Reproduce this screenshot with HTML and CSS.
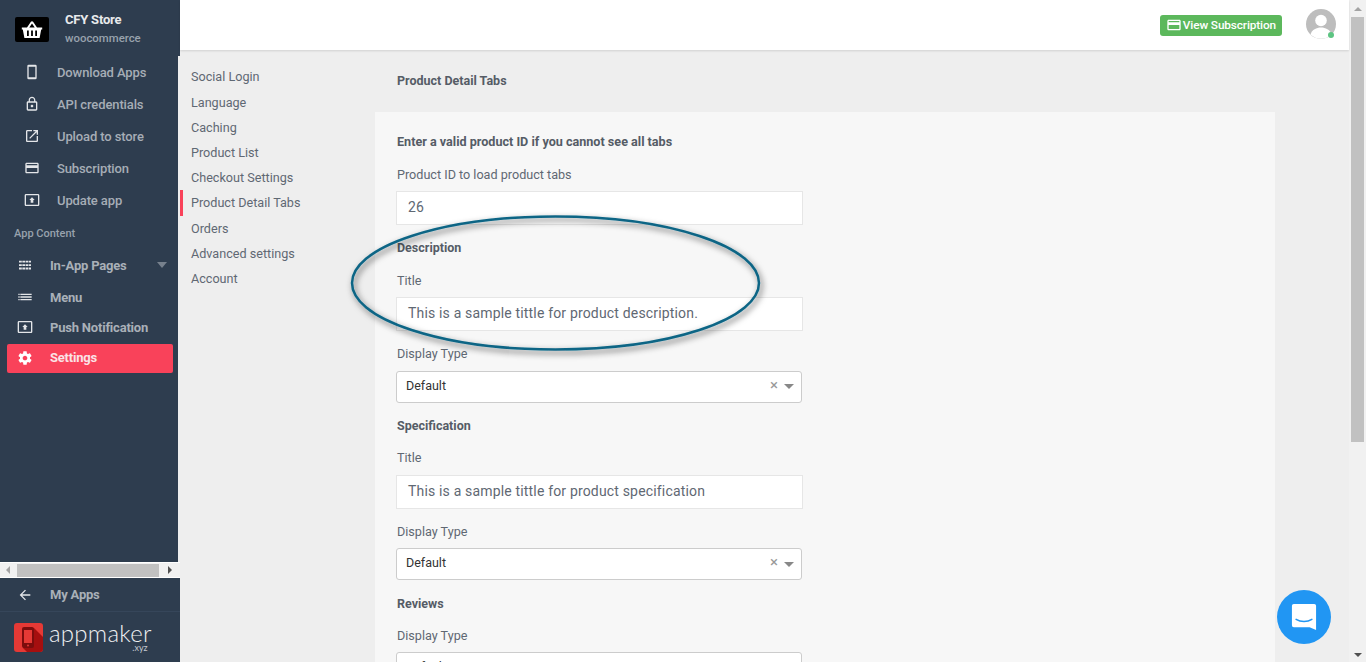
FILE: index.html
```html
<!DOCTYPE html>
<html lang="en">
<head>
<meta charset="utf-8">
<title>Product Detail Tabs</title>
<link rel="stylesheet" href="styles.css">
</head>
<body>
<div class="app">
  <aside class="sidebar">
    <div class="brand">
      <div class="brand-logo">
        <svg viewBox="0 0 24 24" width="24" height="24"><path fill="#fff" d="M12 3.200a1.300 1.300 0 0 1 1.100.6L17 9.500h5.200v1.900h-1L19.600 20H4.400L2.800 11.400h-1V9.500H7l3.900-5.700A1.300 1.300 0 0 1 12 3.200zM12 5.600 9.300 9.500h5.400zM7 12.500V18h1.800v-5.500zM11.100 12.500V18h1.800v-5.500zM15.200 12.500V18H17v-5.500z" fill-rule="evenodd"/></svg>
      </div>
      <div class="brand-text">
        <div class="brand-name">CFY Store</div>
        <div class="brand-type">woocommerce</div>
      </div>
    </div>
    <div class="side-scroll">
      <nav class="nav-top">
        <a class="nav-item"><svg class="ic" viewBox="0 0 24 24"><path fill-rule="evenodd" d="M7 1h10a2 2 0 0 1 2 2v18a2 2 0 0 1-2 2H7a2 2 0 0 1-2-2V3a2 2 0 0 1 2-2zm0 3v16h10V4z"/></svg><span>Download Apps</span></a>
        <a class="nav-item"><svg class="ic" viewBox="0 0 24 24"><path d="M12 17c1.100 0 2-.9 2-2s-.9-2-2-2-2 .9-2 2 .9 2 2 2zm6-9h-1V6c0-2.760-2.240-5-5-5S7 3.240 7 6v2H6c-1.100 0-2 .9-2 2v10c0 1.100.9 2 2 2h12c1.100 0 2-.9 2-2V10c0-1.100-.9-2-2-2zM8.900 6c0-1.710 1.390-3.100 3.100-3.100s3.100 1.390 3.100 3.100v2H8.900V6zM18 20H6V10h12v10z"/></svg><span>API credentials</span></a>
        <a class="nav-item"><svg class="ic" viewBox="0 0 24 24"><path d="M19 19H5V5h7V3H5c-1.110 0-2 .9-2 2v14c0 1.100.89 2 2 2h14c1.100 0 2-.9 2-2v-7h-2v7zM14 3v2h3.590l-9.830 9.830 1.410 1.410L19 6.410V10h2V3h-7z"/></svg><span>Upload to store</span></a>
        <a class="nav-item"><svg class="ic" viewBox="0 0 24 24"><path d="M20 4H4c-1.110 0-1.990.89-1.990 2L2 18c0 1.110.89 2 2 2h16c1.110 0 2-.89 2-2V6c0-1.110-.89-2-2-2zm0 14H4v-6h16v6zm0-10H4V6h16v2z"/></svg><span>Subscription</span></a>
        <a class="nav-item"><svg class="ic" viewBox="0 0 24 24"><path d="M21 3H3c-1.110 0-2 .89-2 2v14c0 1.110.89 2 2 2h18c1.110 0 2-.89 2-2V5c0-1.110-.89-2-2-2zm0 16.020H3V4.980h18v14.040zM10 12H8l4-4 4 4h-2v4h-4v-4z"/></svg><span>Update app</span></a>
      </nav>
      <div class="nav-heading">App Content</div>
      <nav class="nav-main">
        <a class="main-item tall"><svg class="ic" viewBox="0 0 24 24"><path d="M3 5.500h4.200v2.700H3zm5 0h4.200v2.700H8zm5 0h4.200v2.700H13zm5 0h3v2.700h-3zM3 10.700h4.200v2.700H3zm5 0h4.200v2.700H8zm5 0h4.200v2.700H13zm5 0h3v2.700h-3zM3 15.900h4.200v2.700H3zm5 0h4.200v2.700H8zm5 0h4.200v2.700H13zm5 0h3v2.700h-3z"/></svg><span>In-App Pages</span><i class="caret"></i></a>
        <a class="main-item tall"><svg class="ic" viewBox="0 0 24 24"><path d="M2 7h2v2H2zm3 0h17v2H5zM2 11h2v2H2zm3 0h17v2H5zM2 15h2v2H2zm3 0h17v2H5z"/></svg><span>Menu</span></a>
        <a class="main-item push"><svg class="ic" viewBox="0 0 24 24"><path d="M21 3H3c-1.110 0-2 .89-2 2v14c0 1.110.89 2 2 2h18c1.110 0 2-.89 2-2V5c0-1.110-.89-2-2-2zm0 16.020H3V4.980h18v14.040zM10 12H8l4-4 4 4h-2v4h-4v-4z"/></svg><span>Push Notification</span></a>
        <a class="main-item active"><svg class="ic" viewBox="0 0 24 24"><path d="M19.430 12.980c.04-.32.07-.64.07-.98s-.03-.66-.07-.98l2.110-1.650c.19-.15.24-.42.12-.64l-2-3.460c-.12-.22-.39-.3-.61-.22l-2.490 1c-.52-.4-1.080-.73-1.690-.98l-.38-2.650C14.460 2.180 14.250 2 14 2h-4c-.25 0-.46.18-.49.42l-.38 2.650c-.61.25-1.170.59-1.690.98l-2.490-1c-.23-.09-.49 0-.61.22l-2 3.460c-.13.22-.07.49.12.64l2.110 1.650c-.04.32-.07.65-.07.98s.03.66.07.98l-2.110 1.650c-.19.15-.24.42-.12.64l2 3.460c.12.22.39.3.61.22l2.490-1c.52.4 1.080.73 1.690.98l.38 2.650c.03.24.24.42.49.42h4c.25 0 .46-.18.49-.42l.38-2.650c.61-.25 1.170-.59 1.690-.98l2.490 1c.23.09.49 0 .61-.22l2-3.460c.12-.22.07-.49-.12-.64l-2.110-1.650zM12 15.500c-1.930 0-3.500-1.570-3.500-3.500s1.570-3.500 3.500-3.500 3.500 1.570 3.500 3.500-1.570 3.500-3.500 3.500z"/></svg><span>Settings</span></a>
      </nav>
    </div>
    <div class="h-scroll">
      <i class="arrow-left"></i>
      <div class="h-thumb"></div>
      <i class="arrow-right"></i>
    </div>
    <a class="my-apps"><svg class="ic" viewBox="0 0 24 24"><path d="M20 11H7.830l5.590-5.590L12 4l-8 8 8 8 1.410-1.410L7.830 13H20v-2z"/></svg><span>My Apps</span></a>
    <div class="maker">
      <svg class="maker-mark" viewBox="0 0 29 29" width="29" height="29">
        <rect width="29" height="29" rx="3" fill="#e53935"/>
        <path d="M9 25 9 5h11l9 9v12a3 3 0 0 1-3 3H13z" fill="#a50f0f"/>
        <rect x="8" y="4" width="12" height="21" rx="2" fill="#7c0d0d"/>
        <rect x="10" y="7" width="8" height="13" fill="#e53935"/>
        <circle cx="14" cy="22.500" r="1" fill="#e53935"/>
      </svg>
      <div class="maker-text">
        <div class="maker-word">appmaker</div>
        <div class="maker-xyz">.xyz</div>
      </div>
    </div>
  </aside>

  <div class="main">
    <header class="topbar">
      <a class="sub-btn"><svg viewBox="0 0 24 24" width="16" height="16"><path fill="#fff" d="M20 4H4c-1.110 0-1.990.89-1.990 2L2 18c0 1.110.89 2 2 2h16c1.110 0 2-.89 2-2V6c0-1.110-.89-2-2-2zm0 14H4v-6h16v6zm0-10H4V6h16v2z"/></svg>View Subscription</a>
      <div class="avatar">
        <svg viewBox="0 0 30 30" width="30" height="30"><circle cx="15" cy="15" r="15" fill="#bdbdbd"/><circle cx="15" cy="11.500" r="5.800" fill="#fff"/><path d="M4.500 25.500c1.500-5 6-7 10.500-7s9 2 10.500 7a15 15 0 0 1-21 0z" fill="#fff"/></svg>
        <i class="status"></i>
      </div>
    </header>
    <div class="content">
      <nav class="subnav">
        <a>Social Login</a>
        <a>Language</a>
        <a>Caching</a>
        <a>Product List</a>
        <a>Checkout Settings</a>
        <a class="current">Product Detail Tabs</a>
        <a>Orders</a>
        <a>Advanced settings</a>
        <a>Account</a>
      </nav>
      <section class="panel">
        <div class="panel-head">Product Detail Tabs</div>
        <div class="panel-body">
          <h4 class="tight">Enter a valid product ID if you cannot see all tabs</h4>
          <label>Product ID to load product tabs</label>
          <div class="input">26</div>
          <h4>Description</h4>
          <label>Title</label>
          <div class="input">This is a sample tittle for product description.</div>
          <label>Display Type</label>
          <div class="select"><span>Default</span><b>×</b><i class="sel-caret"></i></div>
          <h4>Specification</h4>
          <label>Title</label>
          <div class="input">This is a sample tittle for product specification</div>
          <label>Display Type</label>
          <div class="select"><span>Default</span><b>×</b><i class="sel-caret"></i></div>
          <h4 class="last">Reviews</h4>
          <label>Display Type</label>
          <div class="select"><span>Default</span><b>×</b><i class="sel-caret"></i></div>
        </div>
      </section>
    </div>
  </div>

  <div class="v-scroll">
    <i class="arrow-up"></i>
    <div class="v-thumb"></div>
    <div class="v-rest"></div>
    <i class="arrow-down"></i>
  </div>
</div>

<svg class="callout" viewBox="0 0 440 160" width="440" height="160">
  <defs><filter id="sh" x="-10%" y="-20%" width="120%" height="140%"><feDropShadow dx="2" dy="3" stdDeviation="3" flood-color="#000" flood-opacity=".65"/></filter></defs>
  <ellipse cx="216.500" cy="77" rx="203.500" ry="66.500" fill="none" stroke="#0b6585" stroke-width="2.500" filter="url(#sh)"/>
</svg>

<div class="chat">
  <svg viewBox="0 0 28 30" width="26" height="28"><path fill="#fff" d="M3 1h22a2 2 0 0 1 2 2v26l-7-3H3a2 2 0 0 1-2-2V3a2 2 0 0 1 2-2z"/><path d="M5.500 17.500c5 3 12 3 17 0" fill="none" stroke="#2196f3" stroke-width="1.600" stroke-linecap="round"/></svg>
</div>
</body>
</html>
```
FILE: styles.css
```css
* { box-sizing: border-box; }
html, body { margin: 0; height: 662px; overflow: hidden; }
body { font-family: Roboto, "Liberation Sans", sans-serif; font-size: 13px; color: #555; background: #eee; position: relative; }
a { text-decoration: none; color: inherit; }
.app { display: flex; height: 662px; }

.sidebar { width: 180px; flex: none; display: flex; flex-direction: column; background: #eee; }
.brand { height: 56px; background: #2e3d4f; display: flex; align-items: flex-start; padding: 17px 0 0 15px; flex: none; }
.brand-logo { width: 34px; height: 25px; background: #000; border-radius: 2px; display: flex; align-items: center; justify-content: center; margin-right: 16px; }
.brand-logo svg { width: 24px; height: 24px; }
.brand-text { margin-top: -5px; }
.brand-name { color: #e8eaec; font-weight: 700; font-size: 13px; line-height: 16px; letter-spacing: -.2px; }
.brand-type { color: #98a2ad; font-size: 11.400px; font-weight: 500; line-height: 16px; margin-top: 2px; }
.side-scroll { flex: 1; width: 178px; background: #2e3d4f; min-height: 0; }

.ic { width: 16px; height: 16px; fill: #e4e6e9; flex: none; }
.nav-item { display: flex; align-items: center; height: 32px; padding-left: 24px; color: #a6adb6; font-weight: 500; font-size: 13px; letter-spacing: -.12px; }
.nav-item .ic { margin-right: 17px; }
.nav-heading { color: #98a2ad; font-size: 11px; font-weight: 500; line-height: 16px; padding: 10px 0 0 14px; height: 33px; }
.nav-main { padding: 0 5px 0 7px; }
.main-item { display: flex; align-items: center; height: 30px; padding-left: 10px; color: #a9b0b8; font-weight: 700; font-size: 13px; letter-spacing: -.2px; border-radius: 2px; position: relative; }
.main-item.tall { height: 32px; }
.main-item.push { height: 31px; padding-bottom: 3px; }
.main-item .ic { margin-right: 17px; }
.main-item.active { background: #f9425a; color: #fbe3e6; height: 29px; padding-bottom: 2px; }
.main-item.active .ic { fill: #fff; }
.caret { position: absolute; right: 6px; top: 13px; border: 5px solid transparent; border-top: 6px solid #77818d; border-bottom: 0; }

.h-scroll { height: 16px; flex: none; background: #f1f1f1; border-top: 1px solid #fff; border-bottom: 1px solid #fff; display: flex; align-items: center; padding: 0 8px 0 6px; gap: 6px; width: 180px; }
.h-thumb { width: 142px; height: 13px; background: #c1c1c1; margin-left: 1px; }
.arrow-left { border: 4px solid transparent; border-right: 4px solid #a3a3a3; border-left: 0; }
.arrow-right { border: 4px solid transparent; border-left: 4px solid #505050; border-right: 0; margin-left: 3px; }

.my-apps { height: 34px; flex: none; display: flex; align-items: center; padding-left: 17px; background: #2e3d4f; color: #a9b0b8; font-weight: 700; letter-spacing: -.2px; border-bottom: 1px solid #36465a; }
.my-apps .ic { margin-right: 17px; }
.maker { height: 50px; flex: none; background: #2e3d4f; display: flex; align-items: flex-start; padding: 11px 0 0 14px; }
.maker-mark { flex: none; }
.maker-text { margin-left: 6px; margin-top: 1px; font-family: Lato, "Open Sans", sans-serif; }
.maker-word { color: #eef0f2; font-weight: 300; font-size: 24px; line-height: 17px; letter-spacing: .25px; }
.maker-xyz { text-align: right; padding-right: 4px; margin-top: 2px; font-size: 9px; line-height: 9px; font-weight: 400; color: #c4c9cf; }

.main { flex: 1; min-width: 0; display: flex; flex-direction: column; }
.topbar { height: 50px; flex: none; background: #fff; box-shadow: 0 1px 2px rgba(0,0,0,.12); display: flex; align-items: flex-start; justify-content: flex-end; padding: 9px 13px 0 0; position: relative; z-index: 1; }
.sub-btn { display: flex; align-items: center; gap: 1px; margin-top: 6px; height: 21px; padding: 0 6px 2px; background: #5cb85c; color: #fff; font-weight: 500; font-size: 11.800px; border-radius: 3px; letter-spacing: -.12px; }
.avatar { position: relative; width: 30px; height: 30px; margin-left: 24px; }
.avatar svg { display: block; }
.status { position: absolute; right: 2px; bottom: 1px; width: 6px; height: 6px; border-radius: 50%; background: #5dc482; }

.content { flex: 1; display: flex; min-height: 0; overflow: hidden; }
.subnav { width: 195px; flex: none; padding-top: 14.400px; display: flex; flex-direction: column; }
.subnav a { display: block; height: 25.200px; line-height: 25px; padding-left: 11px; color: #5f6873; font-size: 12.620px; }
.subnav a.current { border-left: 3px solid #f9425a; padding-left: 8px; }
.panel { width: 900px; flex: none; }
.panel-head { height: 62px; padding: 21px 0 0 22px; font-weight: 700; font-size: 12.500px; line-height: 20px; color: #555c66; }
.panel-body { background: #f7f7f7; padding: 20px 0 40px 21px; }
h4 { margin: 13px 0 12.500px 1px; font-size: 12.500px; font-weight: 700; line-height: 20px; color: #555c66; }
h4.tight { margin: 0 0 12.500px 1px; font-size: 12.600px; }
h4.last { margin-top: 13.500px; margin-bottom: 12px; }
label { display: block; margin: 0 0 6.500px 1px; line-height: 20px; font-size: 12.620px; color: #5f6873; }
.input { width: 407px; height: 34px; background: #fff; border: 1px solid #e6e6e6; padding: 0 11px; line-height: 31.500px; font-size: 14px; letter-spacing: .17px; color: #5f6873; }
.input + label { margin-top: 13px; }
.select { width: 406px; height: 32px; background: #fff; border: 1px solid #ccc; border-radius: 3px; display: flex; align-items: center; padding: 0 7px 3px 9px; color: #333; font-size: 12.500px; }
.select span { flex: 1; }
.select b { font-weight: 400; color: #999; font-size: 15px; margin-right: 6px; line-height: 1; }
.sel-caret { border: 5px solid transparent; border-top: 5px solid #888; border-bottom: 0; margin-top: 3px; }

.v-scroll { width: 17px; flex: none; background: #f1f1f1; display: flex; flex-direction: column; align-items: center; }
.arrow-up { margin: 7px 0 6px; border: 4px solid transparent; border-bottom: 4px solid #a3a3a3; border-top: 0; }
.v-thumb { width: 13px; height: 425px; background: #c1c1c1; flex: none; }
.v-rest { flex: 1; }
.arrow-down { margin-bottom: 5px; border: 4px solid transparent; border-top: 4px solid #505050; border-bottom: 0; }

.callout { position: absolute; left: 339px; top: 206px; pointer-events: none; }
.chat { position: absolute; left: 1277px; top: 590px; width: 54px; height: 54px; border-radius: 50%; background: #2196f3; display: flex; align-items: center; justify-content: center; }
```
